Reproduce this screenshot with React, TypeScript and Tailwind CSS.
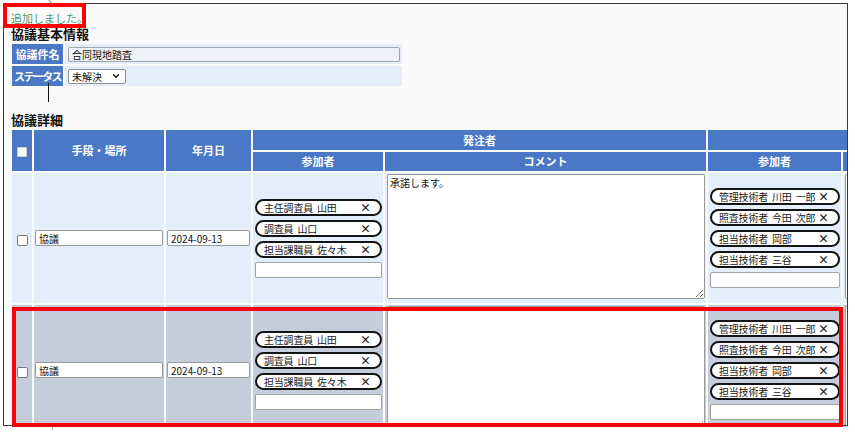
import { ChevronDown } from "lucide-react";

const ordererMembers = ["主任調査員 山田", "調査員 山口", "担当課職員 佐々木"];
const contractorMembers = [
	"管理技術者 川田 一郎",
	"照査技術者 今田 次郎",
	"担当技術者 岡部",
	"担当技術者 三谷",
];

const headCell =
	"bg-[#4a78c6] p-0 text-center align-middle text-[11px] font-bold leading-none text-white";

function Chip({ label }: { label: string }) {
	return (
		<div className="flex h-[17px] items-center justify-between gap-[2px] overflow-hidden rounded-full border-2 border-[#141414] bg-white pr-[9px] pl-[7px]">
			<span className="text-[10px] leading-[13px] tracking-[-0.2px] whitespace-nowrap text-[#1a1a1a] [word-spacing:2px]">
				{label}
			</span>
			<span className="shrink-0 text-[11px] leading-none font-bold text-[#1a1a1a]">
				×
			</span>
		</div>
	);
}

function MemberCell({ names, bg }: { names: string[]; bg: string }) {
	return (
		<td className={`${bg} p-0 align-middle`}>
			<div className="flex flex-col gap-[4px] pr-[1px] pl-[2px]">
				{names.map((n) => (
					<Chip key={n} label={n} />
				))}
				<input
					readOnly
					className="block h-[16px] w-full rounded-[2px] border border-[#a3a3a3] bg-white"
				/>
			</div>
		</td>
	);
}

function Field({ value }: { value: string }) {
	return (
		<input
			readOnly
			value={value}
			className="block h-[16px] w-full rounded-[2px] border border-[#9a9a9a] bg-white px-[3px] text-[10px] text-[#111]"
		/>
	);
}

function Box() {
	return (
		<span className="inline-block h-[11px] w-[11px] rounded-[2px] border border-[#7a7a7a] bg-white align-middle" />
	);
}

function DataRow({ shaded, comment }: { shaded?: boolean; comment: string }) {
	const bg = shaded ? "bg-[#c4cdd9]" : "bg-[#e4eefb]";
	return (
		<tr className="h-[130px]">
			<td className={`${bg} p-0 text-center align-middle`}>
				<Box />
			</td>
			<td className={`${bg} px-[1px] align-middle`}>
				<Field value="協議" />
			</td>
			<td className={`${bg} px-[1px] align-middle`}>
				<Field value="2024-09-13" />
			</td>
			<MemberCell names={ordererMembers} bg={bg} />
			<td className={`${bg} pt-[1px] pr-[1px] pl-[2px] align-top`}>
				<textarea
					readOnly
					value={comment}
					className="block h-[125px] w-full rounded-[2px] border border-[#9a9a9a] bg-white px-[2px] py-[1px] text-[10px] leading-[14px] text-[#111]"
				/>
			</td>
			<MemberCell names={contractorMembers} bg={bg} />
			<td className={`${bg} pt-[1px] pl-[2px] align-top`}>
				<div className="h-[125px] w-full rounded-[2px] border border-[#9a9a9a] bg-white" />
			</td>
		</tr>
	);
}

export default function App() {
	return (
		<div className="relative h-[436px] w-[855px] overflow-hidden bg-white font-['Noto_Sans_CJK_JP',sans-serif]">
			{/* screenshot frame */}
			<div className="mt-[3px] ml-[3px] h-[423px] w-[845px] overflow-hidden border border-[#3a3a3a] bg-[#fafafa] pt-[7px] pl-[6px]">
				<div className="h-[15px] pl-[1px] text-[11px] leading-[14px] text-[#4c9a70]">
					追加しました。
				</div>
				<h2 className="h-[16px] pl-[1px] text-[13px] leading-[16px] font-bold text-[#111]">
					協議基本情報
				</h2>
				<table className="border-separate border-spacing-[2px]">
					<tbody>
						<tr className="h-[20px]">
							<th className={`${headCell} w-[51px]`}>協議件名</th>
							<td className="w-[337px] bg-[#e4eefb] pr-[2px] pl-[3px] align-middle">
								<input
									readOnly
									value="合同現地踏査"
									className="block h-[15px] w-full rounded-[2px] border border-[#a5a5a5] bg-[#eef2f8] px-[3px] text-[10px] text-[#111]"
								/>
							</td>
						</tr>
						<tr className="h-[20px]">
							<th className={`${headCell} w-[51px] tracking-[-1.6px]`}>
								ステータス
							</th>
							<td className="bg-[#e4eefb] pl-[3px] align-middle">
								<div className="flex h-[15px] w-[58px] items-center justify-between rounded-[2px] border border-[#8f8f8f] bg-white pr-[4px] pl-[3px] text-[10px] text-[#111]">
									<span>未解決</span>
									<ChevronDown size={10} strokeWidth={3} />
								</div>
							</td>
						</tr>
					</tbody>
				</table>

				<h2 className="mt-[24px] h-[16px] pl-[1px] text-[13px] leading-[16px] font-bold text-[#111]">
					協議詳細
				</h2>
				<table className="w-[1157px] table-fixed border-separate border-spacing-[2px]">
					<colgroup>
						<col className="w-[20px]" />
						<col className="w-[130px]" />
						<col className="w-[85px]" />
						<col className="w-[130px]" />
						<col className="w-[321px]" />
						<col className="w-[133px]" />
						<col className="w-[322px]" />
					</colgroup>
					<thead>
						<tr className="h-[20px]">
							<th rowSpan={2} className={headCell}>
								<span className="inline-block h-[10px] w-[10px] rounded-[1px] border border-[#d0d0d0] bg-white align-middle" />
							</th>
							<th rowSpan={2} className={headCell}>
								手段・場所
							</th>
							<th rowSpan={2} className={headCell}>
								年月日
							</th>
							<th colSpan={2} className={headCell}>
								発注者
							</th>
							<th colSpan={2} className={headCell} />
						</tr>
						<tr className="h-[19px]">
							<th className={headCell}>参加者</th>
							<th className={headCell}>コメント</th>
							<th className={headCell}>参加者</th>
							<th className={headCell} />
						</tr>
					</thead>
					<tbody>
						<DataRow comment="承諾します。" />
						<DataRow shaded comment="" />
					</tbody>
				</table>
			</div>

			{/* annotations */}
			<div className="absolute top-[3px] left-[3px] h-[25px] w-[83px] border-4 border-[#ff0000]" />
			<div className="absolute top-[307px] left-[12px] h-[120px] w-[831px] border-4 border-[#ff0000]" />
			<div className="absolute top-[83px] left-[48px] h-[19px] w-px bg-[#111]" />
			<svg className="absolute top-0 left-[48px]" width="8" height="6">
				<line x1="1" y1="0" x2="5" y2="5" stroke="#777" strokeWidth="1" />
			</svg>
			<div className="absolute top-[427px] left-[52px] h-[3px] w-px bg-[#bbb]" />
		</div>
	);
}
